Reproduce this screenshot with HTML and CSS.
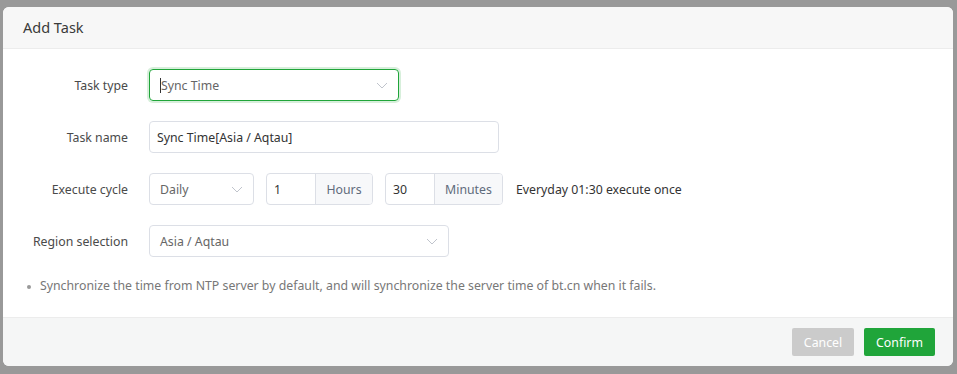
FILE: index.html
```html
<!DOCTYPE html>
<html>
<head>
<meta charset="utf-8">
<link rel="stylesheet" href="styles.css">
</head>
<body>
<div class="dialog">
  <div class="dlg-head">Add Task</div>
  <div class="dlg-body">
    <div class="row">
      <div class="label">Task type</div>
      <div class="select focus w250"><span class="caret"></span><span class="val">Sync Time</span>
        <svg class="chev" viewBox="0 0 12 7" width="12" height="7"><path d="M1 1l5 5 5-5" fill="none" stroke="#c0c4cc" stroke-width="1"/></svg>
      </div>
    </div>
    <div class="row">
      <div class="label">Task name</div>
      <div class="input w350 dark">Sync Time[Asia / Aqtau]</div>
    </div>
    <div class="row">
      <div class="label">Execute cycle</div>
      <div class="select w104"><span class="val">Daily</span>
        <svg class="chev" viewBox="0 0 12 7" width="12" height="7"><path d="M1 1l5 5 5-5" fill="none" stroke="#c0c4cc" stroke-width="1"/></svg>
      </div>
      <div class="group g1">
        <div class="gin">1</div>
        <div class="addon">Hours</div>
      </div>
      <div class="group g2">
        <div class="gin">30</div>
        <div class="addon">Minutes</div>
      </div>
      <div class="hint">Everyday 01:30 execute once</div>
    </div>
    <div class="row">
      <div class="label">Region selection</div>
      <div class="select w300"><span class="val">Asia / Aqtau</span>
        <svg class="chev" viewBox="0 0 12 7" width="12" height="7"><path d="M1 1l5 5 5-5" fill="none" stroke="#c0c4cc" stroke-width="1"/></svg>
      </div>
    </div>
    <ul class="notes">
      <li>Synchronize the time from NTP server by default, and will synchronize the server time of bt.cn when it fails.</li>
    </ul>
  </div>
  <div class="dlg-foot">
    <button class="btn cancel">Cancel</button>
    <button class="btn confirm">Confirm</button>
  </div>
</div>
</body>
</html>
```
FILE: styles.css
```css
* { box-sizing: border-box; }
html, body { margin: 0; padding: 0; }
body {
  background: #999;
  width: 957px;
  height: 374px;
  overflow: hidden;
  font-family: "Noto Sans", "Liberation Sans", sans-serif;
  font-size: 12.3px;
  color: #333;
  padding: 7px 4px 0 3px;
}
.dialog {
  width: 950px;
  height: 359px;
  background: #fff;
  border-radius: 6px;
  overflow: hidden;
  display: flex;
  flex-direction: column;
}
.dlg-head {
  height: 42px;
  background: #f7f7f7;
  border-bottom: 1px solid #ececec;
  padding-left: 20px;
  font-size: 14.5px;
  line-height: 41px;
  color: #3a3a3a;
}
.dlg-body {
  flex: 1;
  padding-top: 20px;
}
.row {
  display: flex;
  align-items: center;
  height: 32px;
  margin-bottom: 20px;
}
.label {
  width: 125px;
  text-align: right;
  margin-right: 21px;
  color: #4a4a4a;
}
.select, .input {
  height: 32px;
  border: 1px solid #dcdfe6;
  border-radius: 4px;
  display: flex;
  align-items: center;
  padding: 0 10px;
  color: #666;
  position: relative;
}
.input.dark { color: #333; padding: 0 7px; }
.select.focus {
  border-color: #20a53a;
  box-shadow: 0 0 0 2px rgba(32,165,58,0.18);
}
.caret {
  display: inline-block;
  width: 1px;
  height: 15px;
  background: #333;
}
.chev { position: absolute; right: 10px; top: 12px; }
.w250 { width: 250px; }
.w350 { width: 350px; }
.w104 { width: 105px; }
.w300 { width: 300px; }
.group {
  display: flex;
  height: 32px;
  border: 1px solid #dcdfe6;
  border-radius: 4px;
  overflow: hidden;
  margin-left: 12px;
}
.g1 { width: 107px; }
.g2 { width: 118px; }
.gin {
  width: 49px;
  padding: 0 7px;
  display: flex;
  align-items: center;
  color: #333;
  border-right: 1px solid #dcdfe6;
}
.addon {
  flex: 1;
  background: #f7f8fa;
  color: #5f6b7c;
  display: flex;
  align-items: center;
  justify-content: center;
}
.hint { margin-left: 13px; color: #333; }
.notes {
  margin: 0;
  padding: 0 0 0 24px;
  list-style: none;
  color: #777;
}
.notes li { position: relative; padding-left: 13px; line-height: 18px; margin-top: 1px; }
.notes li::before {
  content: "";
  position: absolute;
  left: 0;
  top: 8px;
  width: 4px;
  height: 4px;
  border-radius: 50%;
  background: #999;
}
.dlg-foot {
  height: 49px;
  background: #f5f6f6;
  border-top: 1px solid #ececec;
  display: flex;
  justify-content: flex-end;
  align-items: center;
  padding-right: 18px;
  gap: 10px;
}
.btn {
  height: 28px;
  border: none;
  border-radius: 2px;
  color: #fff;
  font-family: inherit;
  font-size: 12.3px;
  padding: 0;
}
.cancel { width: 62px; background: #cbcbcb; }
.confirm { width: 71px; background: #20a53a; }
```
